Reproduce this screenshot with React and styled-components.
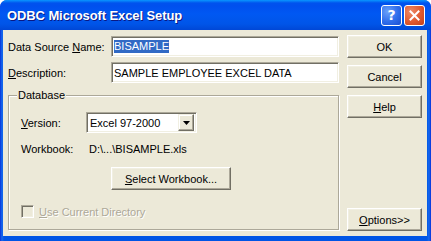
import React from 'react';
import styled, { createGlobalStyle } from 'styled-components';

const GlobalStyle = createGlobalStyle`
  html, body {
    margin: 0;
    padding: 0;
    background: #ffffff;
  }
  body {
    font-family: "Liberation Sans", Arial, sans-serif;
    font-size: 11px;
    color: #000;
  }
`;

const Window = styled.div`
  width: 431px;
  height: 241px;
  display: flex;
  flex-direction: column;
  background: linear-gradient(to right, #0831d9 0, #166aee 2px, #0055e5 4px, #0055e5 427px, #166aee 429px, #0831d9 100%);
  border-radius: 7px 7px 0 0;
  overflow: hidden;
`;

const TitleBar = styled.div`
  height: 30px;
  flex: none;
  display: flex;
  align-items: center;
  padding: 0 6px 0 7px;
  background: linear-gradient(
    to bottom,
    #0997ff 0px,
    #0053ee 3px,
    #0050ee 6px,
    #0058f2 14px,
    #0055e8 24px,
    #0047d6 30px
  );
`;

const Title = styled.div`
  flex: 1;
  color: #fff;
  font-family: "Liberation Sans", Arial, sans-serif;
  font-weight: bold;
  font-size: 13px;
  letter-spacing: -0.1px;
  text-shadow: 1px 1px 0 #0a1883;
  white-space: nowrap;
`;

const CaptionButton = styled.div`
  width: 21px;
  height: 21px;
  box-sizing: border-box;
  border: 1px solid #fff;
  border-radius: 3px;
  display: flex;
  align-items: center;
  justify-content: center;
  margin-left: 2px;
  color: #fff;
  font-family: "DejaVu Sans", sans-serif;
  font-weight: bold;
  font-size: 14px;
  background: ${(p) =>
    p.$close
      ? 'radial-gradient(circle at 30% 30%, #ee8a67 0%, #e0592f 55%, #c2401b 100%)'
      : 'radial-gradient(circle at 30% 30%, #6aa2fa 0%, #2f6deb 55%, #1a4fd0 100%)'};
`;

const Client = styled.div`
  flex: 1;
  margin: 0 4px 5px 3px;
  background: #ece9d8;
  display: flex;
  padding: 5px 5px 5px 5px;
  gap: 8px;
`;

const FormPane = styled.div`
  width: 332px;
  display: flex;
  flex-direction: column;
`;

const FieldRow = styled.div`
  display: flex;
  align-items: center;
  height: 21px;
  margin-top: ${(p) => p.$top || 0}px;
`;

const Label = styled.div`
  width: ${(p) => p.$width || 103}px;
  flex: none;
  white-space: nowrap;
`;

const TextBox = styled.div`
  flex: 1;
  height: 21px;
  box-sizing: border-box;
  background: #fff;
  border: 1px solid;
  border-color: #aca899 #fff #fff #aca899;
  box-shadow: inset 1px 1px 0 #716f64, inset -1px -1px 0 #f1efe2;
  padding: 0 2px;
  display: flex;
  align-items: center;
  white-space: nowrap;
`;

const Selected = styled.span`
  background: #316ac5;
  color: #fff;
  line-height: 13px;
`;

const GroupBox = styled.div`
  position: relative;
  margin-top: 12px;
  height: 135px;
  box-sizing: border-box;
  border: 1px solid #aca899;
  box-shadow: inset 1px 1px 0 #fff, 1px 1px 0 #fff;
  padding: 16px 12px 0 12px;
  display: flex;
  flex-direction: column;
`;

const Legend = styled.div`
  position: absolute;
  top: -7px;
  left: 8px;
  padding: 0 1px;
  background: #ece9d8;
  line-height: 13px;
`;

const Combo = styled.div`
  width: 111px;
  height: 21px;
  box-sizing: border-box;
  background: #fff;
  border: 1px solid;
  border-color: #aca899 #fff #fff #aca899;
  box-shadow: inset 1px 1px 0 #716f64, inset -1px -1px 0 #f1efe2;
  padding: 2px 2px 2px 3px;
  display: flex;
  align-items: center;
`;

const ComboText = styled.div`
  flex: 1;
  white-space: nowrap;
`;

const DropButton = styled.div`
  width: 16px;
  height: 17px;
  box-sizing: border-box;
  background: #ece9d8;
  border: 1px solid;
  border-color: #f1efe2 #716f64 #716f64 #f1efe2;
  box-shadow: inset -1px -1px 0 #aca899, inset 1px 1px 0 #fff;
  display: flex;
  align-items: center;
  justify-content: center;
`;

const InfoRow = styled.div`
  display: flex;
  align-items: center;
  height: 13px;
  margin-top: ${(p) => p.$top || 0}px;
  white-space: nowrap;
`;

const Button = styled.div`
  width: ${(p) => p.$width || 75}px;
  height: 23px;
  flex: none;
  box-sizing: border-box;
  background: #ece9d8;
  border: 1px solid;
  border-color: #fff #716f64 #716f64 #fff;
  box-shadow: inset -1px -1px 0 #aca899, inset 1px 1px 0 #f1efe2;
  display: flex;
  align-items: center;
  justify-content: center;
  white-space: nowrap;
  margin-top: ${(p) => (p.$auto ? 'auto' : `${p.$top || 0}px`)};
  margin-left: ${(p) => p.$left || 0}px;
`;

const CheckRow = styled.div`
  display: flex;
  align-items: center;
  margin-top: ${(p) => p.$top || 0}px;
  color: #aca899;
  text-shadow: 1px 1px 0 #fff;
`;

const CheckBox = styled.div`
  width: 13px;
  height: 13px;
  box-sizing: border-box;
  border: 1px solid;
  border-color: #aca899 #fff #fff #aca899;
  box-shadow: inset 1px 1px 0 #716f64, inset -1px -1px 0 #f1efe2;
  background: #ece9d8;
  margin-right: 5px;
`;

const ButtonColumn = styled.div`
  width: 75px;
  display: flex;
  flex-direction: column;
`;

const Hot = styled.span`
  text-decoration: underline;
  text-underline-offset: 1px;
`;

const App = () => (
  <>
    <GlobalStyle />
    <Window>
      <TitleBar>
        <Title>ODBC Microsoft Excel Setup</Title>
        <CaptionButton>?</CaptionButton>
        <CaptionButton $close>
          <svg width="11" height="11" viewBox="0 0 11 11">
            <path d="M1.5 1.5 L9.5 9.5 M9.5 1.5 L1.5 9.5" stroke="#fff" strokeWidth="2" strokeLinecap="square" />
          </svg>
        </CaptionButton>
      </TitleBar>
      <Client>
        <FormPane>
          <FieldRow $top={1}>
            <Label>Data Source <Hot>N</Hot>ame:</Label>
            <TextBox>
              <Selected>BISAMPLE</Selected>
            </TextBox>
          </FieldRow>
          <FieldRow $top={5}>
            <Label><Hot>D</Hot>escription:</Label>
            <TextBox>SAMPLE EMPLOYEE EXCEL DATA</TextBox>
          </FieldRow>
          <GroupBox>
            <Legend>Database</Legend>
            <FieldRow>
              <Label $width={65}><Hot>V</Hot>ersion:</Label>
              <Combo>
                <ComboText>Excel 97-2000</ComboText>
                <DropButton>
                  <svg width="7" height="4" viewBox="0 0 7 4">
                    <path d="M0 0 H7 L3.5 4 Z" fill="#000" />
                  </svg>
                </DropButton>
              </Combo>
            </FieldRow>
            <InfoRow $top={9}>
              <Label $width={68}>Workbook:</Label>
              D:\...\BISAMPLE.xls
            </InfoRow>
            <Button $width={120} $top={12} $left={90}>
              <span><Hot>S</Hot>elect Workbook...</span>
            </Button>
            <CheckRow $top={15}>
              <CheckBox />
              <span><Hot>U</Hot>se Current Directory</span>
            </CheckRow>
          </GroupBox>
        </FormPane>
        <ButtonColumn>
          <Button>OK</Button>
          <Button $top={7}>Cancel</Button>
          <Button $top={7}><span><Hot>H</Hot>elp</span></Button>
          <Button $auto><span><Hot>O</Hot>ptions&gt;&gt;</span></Button>
        </ButtonColumn>
      </Client>
    </Window>
  </>
);

export default App;
